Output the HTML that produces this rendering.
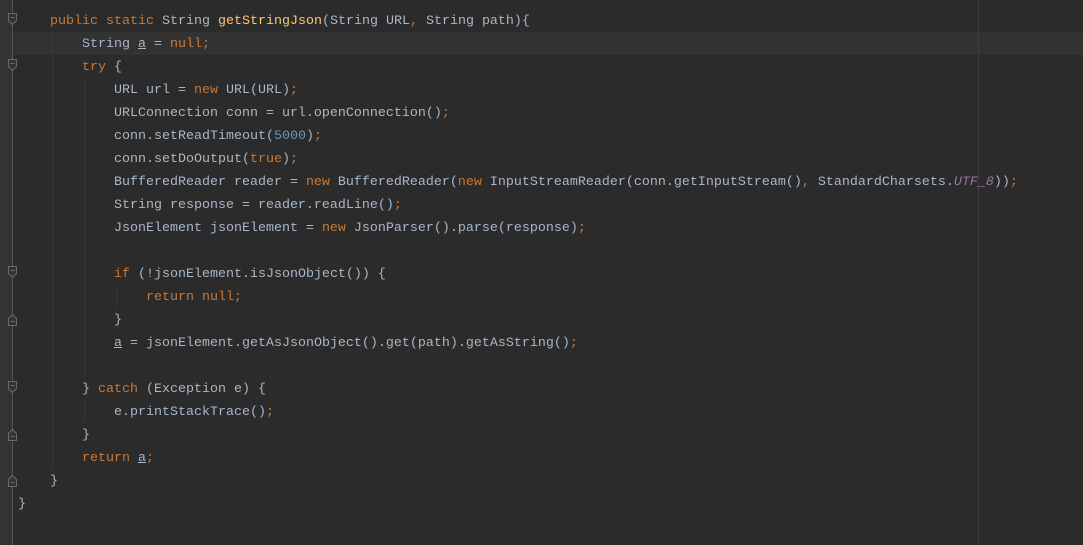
<!DOCTYPE html>
<html><head><meta charset="utf-8"><style>
html,body{margin:0;padding:0;width:1083px;height:545px;overflow:hidden;background:#2b2b2b}
.gut{position:absolute;left:0;top:0;width:12px;height:545px;background:#313335}
.gl{position:absolute;left:12px;top:0;width:1px;height:545px;background:#555}
.rm{position:absolute;left:978px;top:0;width:1px;height:545px;background:#3c3c3c}
.hl{position:absolute;left:13px;top:32px;width:1070px;height:23px;background:#323232}
.ig{position:absolute;width:1px;background:#373737}
pre{position:absolute;left:18px;top:10px;margin:0;font-family:"Liberation Mono",monospace;font-size:13.33px;line-height:23px;color:#a9b7c6}
.k{color:#cc7832}.m{color:#ffc66d}.n{color:#6897bb}.s{color:#9876aa;font-style:italic}.u{text-decoration:underline}
svg{position:absolute;left:0;top:0}
</style></head><body>
<div class="gut"></div>
<div class="hl"></div>
<div class="gl"></div>
<div class="rm"></div>
<div class="ig" style="left:52px;top:32px;height:437px"></div>
<div class="ig" style="left:84px;top:78px;height:299px"></div>
<div class="ig" style="left:84px;top:400px;height:23px"></div>
<div class="ig" style="left:116px;top:285px;height:23px"></div>
<svg width="20" height="545">
<g fill="#313335" stroke="#6a6a6a" stroke-width="1">
<path d="M8.5 13.5h8v7l-4 4l-4-4z"/><path d="M10.5 17.5h4"/>
<path d="M8.5 59.5h8v7l-4 4l-4-4z"/><path d="M10.5 63.5h4"/>
<path d="M8.5 266.5h8v7l-4 4l-4-4z"/><path d="M10.5 270.5h4"/>
<path d="M8.5 381.5h8v7l-4 4l-4-4z"/><path d="M10.5 385.5h4"/>
<path d="M8.5 325.5h8v-7l-4-4l-4 4z"/><path d="M10.5 321.5h4"/>
<path d="M8.5 440.5h8v-7l-4-4l-4 4z"/><path d="M10.5 436.5h4"/>
<path d="M8.5 486.5h8v-7l-4-4l-4 4z"/><path d="M10.5 482.5h4"/>
</g></svg>
<pre>    <span class="k">public static</span> String <span class="m">getStringJson</span>(String URL<span class="k">,</span> String path){
        String <span class="u">a</span> = <span class="k">null;</span>
        <span class="k">try</span> {
            URL url = <span class="k">new</span> URL(URL)<span class="k">;</span>
            URLConnection conn = url.openConnection()<span class="k">;</span>
            conn.setReadTimeout(<span class="n">5000</span>)<span class="k">;</span>
            conn.setDoOutput(<span class="k">true</span>)<span class="k">;</span>
            BufferedReader reader = <span class="k">new</span> BufferedReader(<span class="k">new</span> InputStreamReader(conn.getInputStream()<span class="k">,</span> StandardCharsets.<span class="s">UTF_8</span>))<span class="k">;</span>
            String response = reader.readLine()<span class="k">;</span>
            JsonElement jsonElement = <span class="k">new</span> JsonParser().parse(response)<span class="k">;</span>

            <span class="k">if</span> (!jsonElement.isJsonObject()) {
                <span class="k">return null;</span>
            }
            <span class="u">a</span> = jsonElement.getAsJsonObject().get(path).getAsString()<span class="k">;</span>

        } <span class="k">catch</span> (Exception e) {
            e.printStackTrace()<span class="k">;</span>
        }
        <span class="k">return</span> <span class="u">a</span><span class="k">;</span>
    }
}</pre>
</body></html>
